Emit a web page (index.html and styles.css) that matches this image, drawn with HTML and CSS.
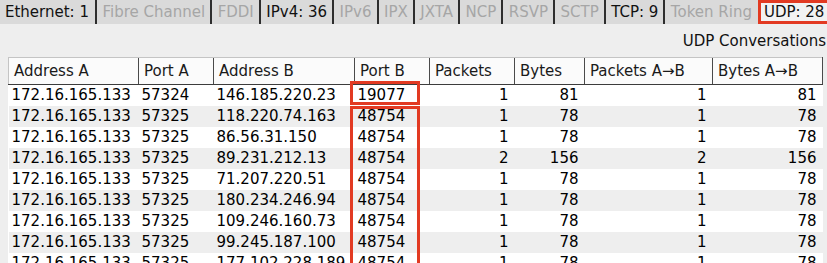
FILE: index.html
```html
<!DOCTYPE html>
<html>
<head lang="en">
    <meta charset="UTF-8">
    <title>Conversations</title>
    <link rel="stylesheet" href="styles.css">
</head>
<body>

<div class="tabs">
    <span class="tab">Ethernet: 1</span>
    <span class="tab off">Fibre Channel</span>
    <span class="tab off">FDDI</span>
    <span class="tab">IPv4: 36</span>
    <span class="tab off">IPv6</span>
    <span class="tab off">IPX</span>
    <span class="tab off">JXTA</span>
    <span class="tab off">NCP</span>
    <span class="tab off">RSVP</span>
    <span class="tab off">SCTP</span>
    <span class="tab">TCP: 9</span>
    <span class="tab off">Token Ring</span>
    <span class="tab current">UDP: 28</span>
</div>

<div class="title">UDP Conversations</div>

<div class="grid">
    <table>
        <colgroup>
            <col class="w-addr-a">
            <col class="w-port-a">
            <col class="w-addr-b">
            <col class="w-port-b">
            <col class="w-packets">
            <col class="w-bytes">
            <col class="w-packets-ab">
            <col class="w-bytes-ab">
        </colgroup>
        <thead>
        <tr>
            <th>Address A</th>
            <th>Port A</th>
            <th>Address B</th>
            <th>Port B</th>
            <th>Packets</th>
            <th>Bytes</th>
            <th>Packets A→B</th>
            <th>Bytes A→B</th>
        </tr>
        </thead>
        <tbody>
        <tr><td>172.16.165.133</td><td>57324</td><td>146.185.220.23</td><td>19077</td><td class="num">1</td><td class="num">81</td><td class="num">1</td><td class="num">81</td></tr>
        <tr><td>172.16.165.133</td><td>57325</td><td>118.220.74.163</td><td>48754</td><td class="num">1</td><td class="num">78</td><td class="num">1</td><td class="num">78</td></tr>
        <tr><td>172.16.165.133</td><td>57325</td><td>86.56.31.150</td><td>48754</td><td class="num">1</td><td class="num">78</td><td class="num">1</td><td class="num">78</td></tr>
        <tr><td>172.16.165.133</td><td>57325</td><td>89.231.212.13</td><td>48754</td><td class="num">2</td><td class="num">156</td><td class="num">2</td><td class="num">156</td></tr>
        <tr><td>172.16.165.133</td><td>57325</td><td>71.207.220.51</td><td>48754</td><td class="num">1</td><td class="num">78</td><td class="num">1</td><td class="num">78</td></tr>
        <tr><td>172.16.165.133</td><td>57325</td><td>180.234.246.94</td><td>48754</td><td class="num">1</td><td class="num">78</td><td class="num">1</td><td class="num">78</td></tr>
        <tr><td>172.16.165.133</td><td>57325</td><td>109.246.160.73</td><td>48754</td><td class="num">1</td><td class="num">78</td><td class="num">1</td><td class="num">78</td></tr>
        <tr><td>172.16.165.133</td><td>57325</td><td>99.245.187.100</td><td>48754</td><td class="num">1</td><td class="num">78</td><td class="num">1</td><td class="num">78</td></tr>
        <tr><td>172.16.165.133</td><td>57325</td><td>177.102.228.189</td><td>48754</td><td class="num">1</td><td class="num">78</td><td class="num">1</td><td class="num">78</td></tr>
        </tbody>
    </table>
    <div class="mark mark-first"></div>
    <div class="mark mark-rest"></div>
</div>

</body>
</html>
```

FILE: styles.css
```css
*{
    margin: 0px;
    padding: 0px;
    box-sizing: border-box;
}
html, body{
    height: 100%;
    overflow: hidden;
}
body{
    background-color: #eeeeee;
    font-family: "DejaVu Sans", "Liberation Sans", sans-serif;
    font-size: 15px;
    color: #111111;
}
.tabs{
    display: flex;
    height: 24px;
    background-color: #dadada;
}
.tab{
    display: flex;
    align-items: center;
    padding: 0px 5px 0px 5.5px;
    border-right: 2px solid #2e2e2e;
    white-space: nowrap;
}
.tab:first-child{
    padding-left: 5px;
    padding-right: 6px;
}
.tab.off{
    color: #a6a6a6;
}
.tab:nth-last-child(2){
    border-right: none;
    padding-right: 4px;
}
.tab.current{
    flex: 1;
    margin-left: 2px;
    padding-left: 3px;
    border: 3px solid #e23a22;
    background-color: #f2f2f2;
}
.title{
    height: 33px;
    padding: 8px 1px 0px 0px;
    text-align: right;
    line-height: 18px;
}
.grid{
    position: relative;
    margin-left: 8px;
    width: 814px;
}
table{
    width: 814px;
    table-layout: fixed;
    border-collapse: collapse;
    background-color: #ffffff;
}
.w-addr-a{ width: 130px; }
.w-port-a{ width: 75px; }
.w-addr-b{ width: 141px; }
.w-port-b{ width: 75px; }
.w-packets{ width: 85px; }
.w-bytes{ width: 70px; }
.w-packets-ab{ width: 128px; }
.w-bytes-ab{ width: 110px; }
th{
    height: 27px;
    padding: 0px 5px;
    text-align: left;
    font-weight: normal;
    color: #1a1a1a;
    background-color: #fbfbfb;
    border-top: 1px solid #c4c4c4;
    border-bottom: 1px solid #3c3c3c;
    border-left: 1px solid #4a4a4a;
    white-space: nowrap;
    overflow: hidden;
}
th:first-child{
    border-left: 1px solid #c4c4c4;
}
th:last-child{
    border-right: 1px solid #4a4a4a;
}
td{
    height: 21px;
    padding: 0px 3px;
    white-space: nowrap;
    overflow: hidden;
    color: #000000;
}
td.num{
    text-align: right;
    padding-right: 6px;
}
tbody tr:nth-child(even) td{
    background-color: #eeeeee;
}
.mark{
    position: absolute;
    left: 342px;
    width: 70px;
    border: 3px solid #e23a22;
}
.mark-first{
    top: 24px;
    height: 24px;
}
.mark-rest{
    top: 49px;
    height: 200px;
}
```
